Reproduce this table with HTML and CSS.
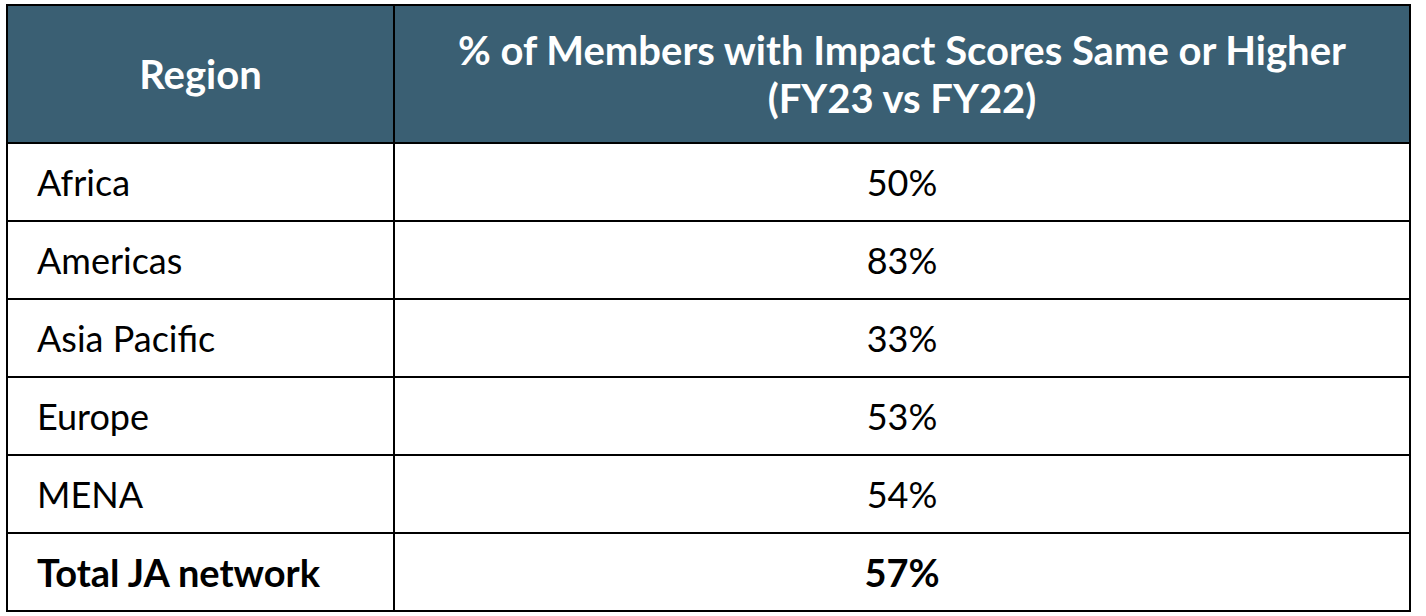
FILE: index.html
```html
<!DOCTYPE html>
<html>
<head>
<meta charset="utf-8">
<link rel="stylesheet" href="styles.css">
</head>
<body>
<table class="data">
  <thead>
    <tr class="head-row">
      <th class="col-region">Region</th>
      <th class="col-pct">% of Members with Impact Scores Same or Higher<br>(FY23 vs FY22)</th>
    </tr>
  </thead>
  <tbody>
    <tr><td class="region">Africa</td><td class="pct">50%</td></tr>
    <tr><td class="region">Americas</td><td class="pct">83%</td></tr>
    <tr><td class="region">Asia Pacific</td><td class="pct">33%</td></tr>
    <tr><td class="region">Europe</td><td class="pct">53%</td></tr>
    <tr><td class="region">MENA</td><td class="pct">54%</td></tr>
    <tr class="total"><td class="region">Total JA network</td><td class="pct">57%</td></tr>
  </tbody>
</table>
</body>
</html>
```
FILE: styles.css
```css
html, body {
  background: #ffffff;
}
body {
  margin: 4px 0 0 6px;
  font-family: Lato, "Open Sans", sans-serif;
  color: #000;
}
.data {
  border-collapse: collapse;
  width: 1405px;
  font-size: 36px;
}
.data th, .data td {
  border: 2px solid #000;
  padding: 0;
}
.head-row th {
  background: #3a5f73;
  color: #fff;
  font-weight: 700;
  font-size: 40px;
  height: 136px;
  line-height: 48px;
  text-align: center;
}
.col-region {
  width: 385px;
}
.data td {
  height: 76px;
}
.region {
  padding-left: 29px !important;
  text-align: left;
}
.pct {
  text-align: center;
}
.total td {
  font-weight: 700;
  font-size: 38px;
}
```
